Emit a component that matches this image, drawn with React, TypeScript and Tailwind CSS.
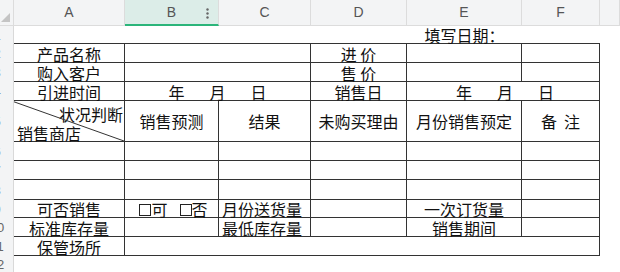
import React from "react";
import clsx from "clsx";

const F = { fontFamily: '"Noto Sans CJK SC", "Noto Sans", sans-serif' };

type CellProps = {
  r?: boolean;
  b?: boolean;
  span?: 1 | 2 | 5;
  mid?: boolean;
  left?: boolean;
  children?: React.ReactNode;
};

function Cell({ r, b, span = 1, mid, left, children }: CellProps) {
  return (
    <div
      className={clsx(
        "flex whitespace-nowrap text-[16px] leading-[16px] text-[#111] min-w-0",
        mid ? "items-center" : "items-end",
        left ? "justify-start pl-[3px]" : "justify-center",
        r && "border-r border-r-[#333]",
        b && "border-b border-b-[#333]",
        span === 2 && "col-span-2",
        span === 5 && "col-span-5"
      )}
    >
      {children}
    </div>
  );
}

function RowHead({ n }: { n: number }) {
  return (
    <div className="bg-[#f3f4f5] border-r border-[#d9d9d9] overflow-hidden flex items-center">
      <div className="w-[30px] -ml-[18px] shrink-0 text-center text-[13px] leading-[13px] text-[#666]" style={{ fontFamily: '"Liberation Sans", sans-serif' }}>
        {n}
      </div>
    </div>
  );
}

function ColHead({ label, sel }: { label: string; sel?: boolean }) {
  return (
    <div
      className={clsx(
        "relative flex items-center justify-center text-[14px] text-[#555] border-r border-[#dcdcdc]",
        sel ? "bg-[#dcede8] border-b-2 border-b-[#2bb57a]" : "bg-[#f3f4f5] border-b border-b-[#dcdcdc]"
      )}
      style={{ fontFamily: '"Liberation Sans", sans-serif' }}
    >
      {label}
      {sel && (
        <svg className="absolute right-[9px] top-[8px]" width="3" height="11" viewBox="0 0 3 11">
          <circle cx="1.5" cy="1.5" r="1.2" fill="#666" />
          <circle cx="1.5" cy="5.5" r="1.2" fill="#666" />
          <circle cx="1.5" cy="9.5" r="1.2" fill="#666" />
        </svg>
      )}
    </div>
  );
}

function Ymd() {
  return (
    <span className="flex gap-[25px]">
      <span>年</span>
      <span>月</span>
      <span>日</span>
    </span>
  );
}

function Box() {
  return <span className="inline-block w-[12px] h-[12px] border border-[#222] mb-[1px]" />;
}

export default function App() {
  return (
    <div className="w-[620px] h-[272px] overflow-hidden bg-white" style={F}>
      <div className="grid grid-cols-[14px_111px_94px_92px_96px_115px_78px_20px] grid-rows-[26px_18px_19px_19px_19px_41px_19px_19px_20px_18px_19px_19px_16px]">
        {/* header */}
        <div className="bg-[#f3f4f5] border-r border-b border-[#dcdcdc] relative">
          <svg className="absolute left-0 top-0" width="14" height="26" viewBox="0 0 14 26">
            <polygon points="10,13 10,22 1,22" fill="#c4c4c4" />
          </svg>
        </div>
        <ColHead label="A" />
        <ColHead label="B" sel />
        <ColHead label="C" />
        <ColHead label="D" />
        <ColHead label="E" />
        <ColHead label="F" />
        <ColHead label="" />

        {/* row 1 */}
        <RowHead n={1} />
        <Cell b />
        <Cell b />
        <Cell b />
        <Cell b />
        <Cell b>填写日期：</Cell>
        <Cell b />
        <Cell />

        {/* row 2 */}
        <RowHead n={2} />
        <Cell r b>产品名称</Cell>
        <Cell r b span={2} />
        <Cell r b>进&nbsp;价</Cell>
        <Cell r b />
        <Cell r b />
        <Cell />

        {/* row 3 */}
        <RowHead n={3} />
        <Cell r b>购入客户</Cell>
        <Cell r b span={2} />
        <Cell r b>售&nbsp;价</Cell>
        <Cell r b />
        <Cell r b />
        <Cell />

        {/* row 4 */}
        <RowHead n={4} />
        <Cell r b>引进时间</Cell>
        <Cell r b span={2}>
          <Ymd />
        </Cell>
        <Cell r b>销售日</Cell>
        <Cell r b span={2}>
          <span className="pl-[4px]">
            <Ymd />
          </span>
        </Cell>
        <Cell />

        {/* row 5 */}
        <RowHead n={5} />
        <div className="relative border-r border-b border-[#333] flex flex-col justify-between text-[16px] leading-[16px] text-[#111] whitespace-nowrap">
          <svg className="absolute inset-0 w-full h-full" preserveAspectRatio="none" viewBox="0 0 100 100">
            <line x1="0" y1="2" x2="100" y2="100" stroke="#333" strokeWidth="1" vectorEffect="non-scaling-stroke" />
          </svg>
          <span className="self-end mt-[5px] pr-[1px]">状况判断</span>
          <span className="self-start pl-[3px]">销售商店</span>
        </div>
        <Cell r b mid>销售预测</Cell>
        <Cell r b mid>结果</Cell>
        <Cell r b mid>未购买理由</Cell>
        <Cell r b mid>月份销售预定</Cell>
        <Cell r b mid>备&nbsp;&nbsp;注</Cell>
        <Cell />

        {/* rows 6-8 */}
        {[6, 7, 8].map((n) => (
          <React.Fragment key={n}>
            <RowHead n={n} />
            <Cell r b />
            <Cell r b />
            <Cell r b />
            <Cell r b />
            <Cell r b />
            <Cell r b />
            <Cell />
          </React.Fragment>
        ))}

        {/* row 9 */}
        <RowHead n={9} />
        <Cell r b>可否销售</Cell>
        <Cell r b>
          <span className="flex items-end pl-[4px]">
            <Box />
            <span>可</span>
            <span className="w-[12px]" />
            <Box />
            <span>否</span>
          </span>
        </Cell>
        <Cell r b left>月份送货量</Cell>
        <Cell r b />
        <Cell r b>一次订货量</Cell>
        <Cell r b />
        <Cell />

        {/* row 10 */}
        <RowHead n={10} />
        <Cell r b>标准库存量</Cell>
        <Cell r b />
        <Cell r b left>最低库存量</Cell>
        <Cell r b />
        <Cell r b>销售期间</Cell>
        <Cell r b />
        <Cell />

        {/* row 11 */}
        <RowHead n={11} />
        <Cell r b>保管场所</Cell>
        <Cell r b span={5} />
        <Cell />

        {/* row 12 */}
        <RowHead n={12} />
        <Cell />
        <Cell />
        <Cell />
        <Cell />
        <Cell />
        <Cell />
        <Cell />
      </div>
    </div>
  );
}
